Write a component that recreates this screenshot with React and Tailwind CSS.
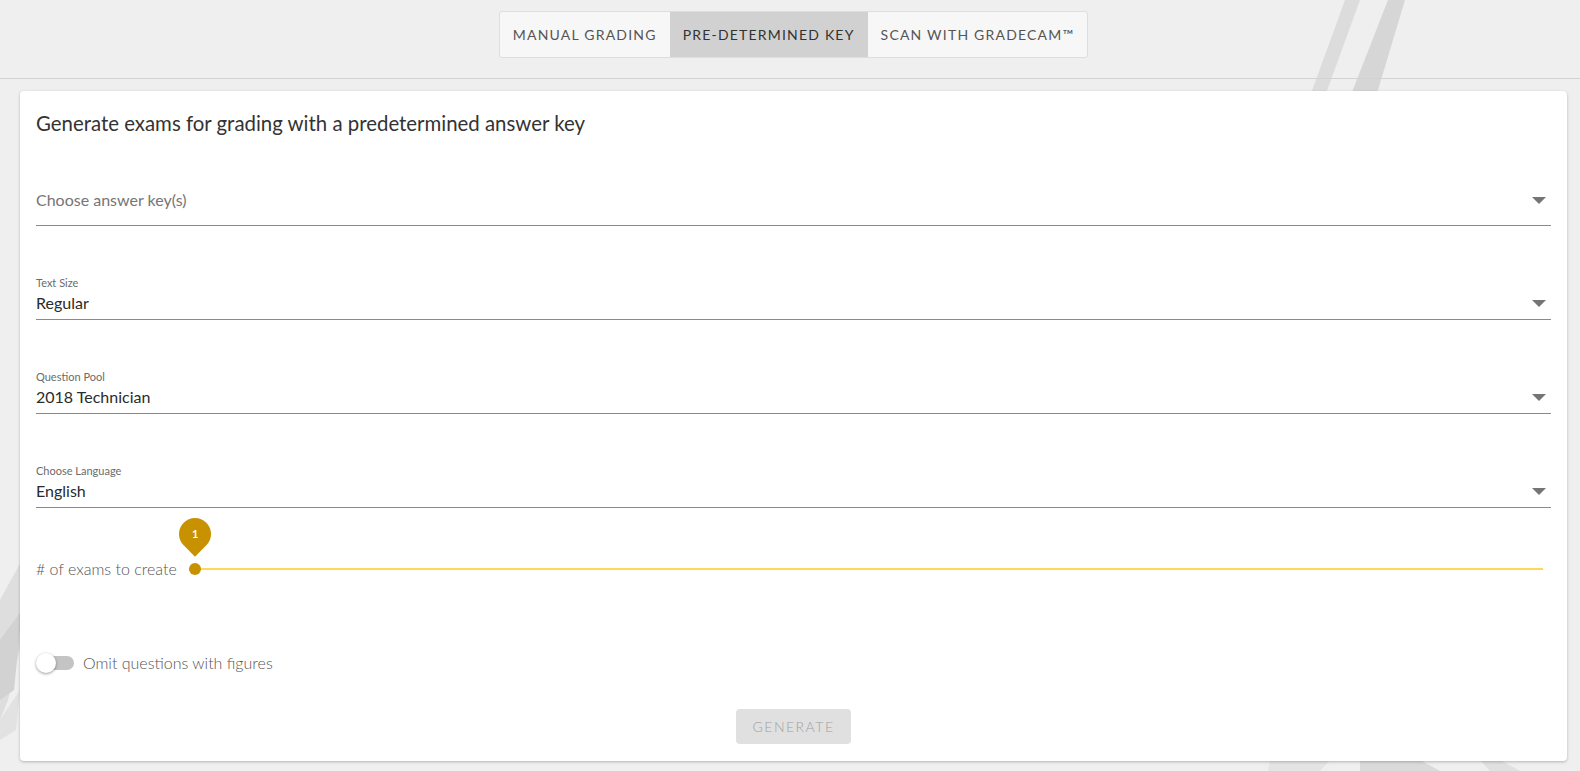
import React, { useState } from 'react';

const font = { fontFamily: 'Lato, "Open Sans", sans-serif' };

// Dropdown arrow like the material select
const Arrow = () => (
  <svg width="24" height="24" viewBox="0 0 24 24" className="shrink-0">
    <path d="M5 9l7 7 7-7z" fill="#757575" />
  </svg>
);

const SelectField = ({ label, value }) => (
  <div className="mt-[50px]">
    <div className="text-[11px] leading-[14px] text-[#6b6b6b]">{label}</div>
    <div className="flex h-[30px] items-center justify-between border-b border-[#8a8a8a] pb-[3px]">
      <span className="text-[16px] text-[#2b2b2b]">{value}</span>
      <Arrow />
    </div>
  </div>
);

const Background = () => (
  <svg className="pointer-events-none absolute inset-0 h-full w-full" viewBox="0 0 1580 771" preserveAspectRatio="none">
    <polygon points="1345,0 1360,0 1320,110 1305,110" fill="#dcdcdc" />
    <polygon points="1388,0 1405,0 1372,110 1345,110" fill="#d6d6d6" />
    <polygon points="0,600 22,560 22,640 8,700 0,720" fill="#dedede" />
    <polygon points="0,640 22,610 14,690 0,700" fill="#d2d2d2" />
    <polygon points="0,720 20,690 16,730 0,740" fill="#e2e2e2" />
    <polygon points="1270,760 1330,760 1320,771 1268,771" fill="#e4e4e4" />
    <polygon points="1360,760 1420,760 1440,771 1360,771" fill="#dadada" />
    <polygon points="1480,760 1500,760 1520,771 1490,771" fill="#e0e0e0" />
  </svg>
);

export default function App() {
  const [tab, setTab] = useState(1);
  const [omit, setOmit] = useState(false);
  const tabs = ['Manual Grading', 'Pre-Determined Key', 'Scan with GradeCam™'];

  return (
    <div className="relative min-h-[771px] bg-[#efefef]" style={font}>
      <Background />
      <div className="relative">
        {/* Tabs header */}
        <div className="h-[79px] border-b border-[#d2d2d2] pt-[11px]">
          <div className="ml-[20px] mr-[13px] flex justify-center">
            <div className="flex h-[47px] overflow-hidden rounded-[3px] border border-[#dedede] bg-[#f7f7f7]">
              {tabs.map((t, i) => (
                <button
                  key={t}
                  onClick={() => setTab(i)}
                  className={
                    i === tab
                      ? 'flex items-center bg-[#d1d1d1] px-[13px] text-[14px] uppercase tracking-[1.2px] text-[#333]'
                      : 'flex items-center px-[13px] text-[14px] uppercase tracking-[1.2px] text-[#555]'
                  }
                >
                  {t}
                </button>
              ))}
            </div>
          </div>
        </div>

        {/* Card */}
        <div className="ml-[20px] mr-[13px] mt-[12px] h-[670px] rounded-[4px] bg-white px-[16px] pt-[20px] shadow-[0_1px_3px_rgba(0,0,0,0.25)]">
          <h2 className="text-[20.4px] leading-6 text-[#333]">Generate exams for grading with a predetermined answer key</h2>

          <div className="mt-[42px] flex h-[49px] items-center justify-between border-b border-[#8a8a8a] pb-[3px]">
            <span className="text-[16px] text-[#757575]">Choose answer key(s)</span>
            <Arrow />
          </div>

          <SelectField label="Text Size" value="Regular" />
          <SelectField label="Question Pool" value="2018 Technician" />
          <SelectField label="Choose Language" value="English" />

          {/* Slider */}
          <div className="mt-[49px] flex h-6 items-center">
            <span className="text-[16px] font-light text-[#555]">
              # of exams to create
            </span>
            <div className="relative ml-[12px] mr-[8px] flex h-6 flex-1 items-center">
              <div className="h-[2px] w-full bg-[#fdd85d]" />
              <div className="absolute left-0 top-1/2 h-[12px] w-[12px] -translate-y-1/2 rounded-full bg-[#c79100]" />
              <div className="absolute left-[-10px] top-[-39px] flex h-[32px] w-[32px] rotate-[-45deg] items-center justify-center rounded-[50%_50%_50%_0] bg-[#c79100]">
                <span className="rotate-45 text-[11px] font-bold text-white">1</span>
              </div>
            </div>
          </div>

          {/* Toggle */}
          <div className="mt-[70px] flex h-6 items-center">
            <button onClick={() => setOmit(!omit)} className="relative flex h-6 w-[38px] items-center">
              <span className="ml-[3px] h-[14px] w-[35px] rounded-full bg-[#c4c4c4]" />
              <span className="absolute left-0 top-[2px] h-[20px] w-[20px] rounded-full bg-white shadow-[0_1px_3px_rgba(0,0,0,0.4)]" />
            </button>
            <span className="ml-[9px] text-[16px] font-light text-[#555]">Omit questions with figures</span>
          </div>

          <div className="mt-[34px] flex justify-center">
            <button className="h-[35px] w-[115px] rounded-[4px] bg-[#e0e0e0] text-[14px] font-light tracking-[1.5px] text-[#a0a0a0]">
              GENERATE
            </button>
          </div>
        </div>
      </div>
    </div>
  );
}
